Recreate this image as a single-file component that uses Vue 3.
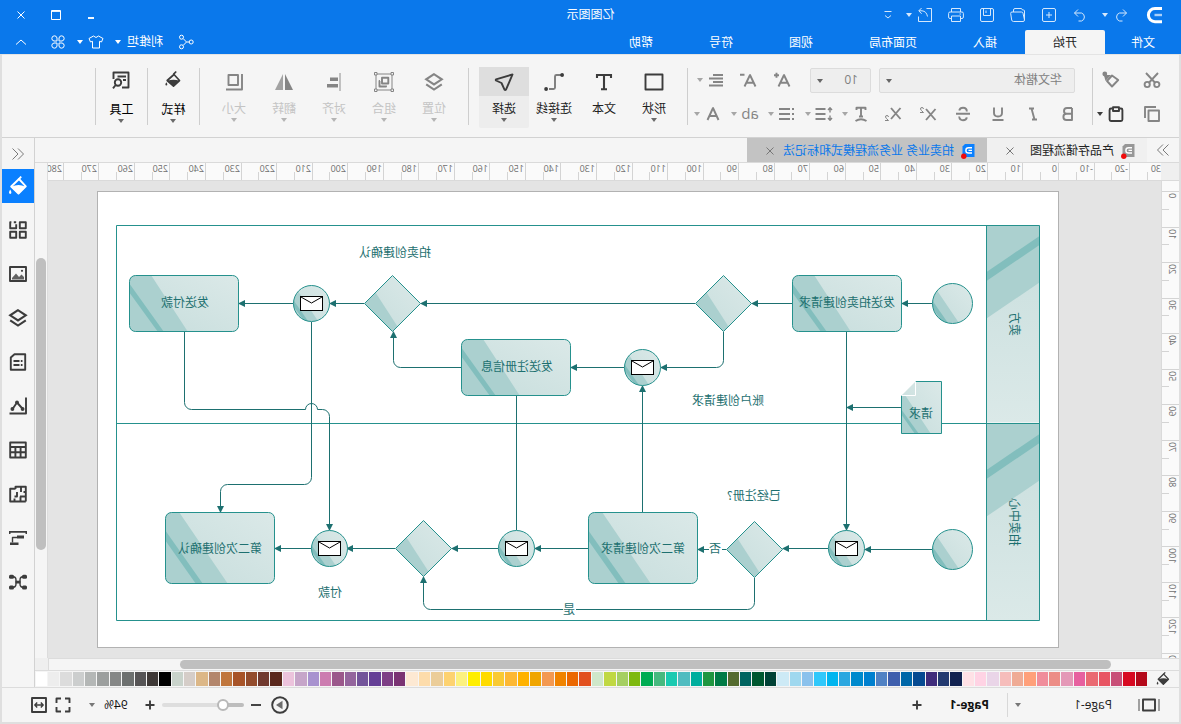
<script setup>
import { ref } from 'vue'

const menuTabs = ['文件', '开始', '插入', '页面布局', '视图', '符号', '帮助']
const activeMenu = ref('开始')

const fileActions = ['plus-box', 'folder', 'save', 'print']
const formatButtons = [
  { icon: 'bold', label: '加粗' },
  { icon: 'italic', label: '斜体' },
  { icon: 'underline', label: '下划线' },
  { icon: 'strike', label: '删除线' },
  { icon: 'sup', label: '上标' },
  { icon: 'sub', label: '下标' }
]
const formatMenus = [
  { icon: 'text-path', label: '文本方向' },
  { icon: 'line-height', label: '行距' },
  { icon: 'list', label: '项目符号' },
  { text: 'ab', label: '突出显示' },
  { icon: 'font-color', label: '字体颜色' }
]
const drawTools = [
  { icon: 'shape', label: '形状', menu: true },
  { icon: 'text', label: '文本', menu: false },
  { icon: 'connector', label: '连接线', menu: true },
  { icon: 'select', label: '选择', menu: true, active: true }
]
const arrangeTools = [
  { icon: 'layers', label: '位置' },
  { icon: 'group', label: '组合' },
  { icon: 'align', label: '对齐' },
  { icon: 'flip', label: '翻转' },
  { icon: 'size', label: '大小' }
]
const sideTools = ['bucket', 'grid', 'image', 'layers', 'note', 'chart', 'table', 'plan', 'gantt', 'mind']

const step = 35.54
const hMajor = Array.from({ length: 32 }, (_, i) => {
  const n = i - 3
  return { label: n * 10, at: Math.round(n * step) + 102, mid: Math.round((n + 0.5) * step) + 102 }
})
const vMajor = Array.from({ length: 14 }, (_, n) => ({
  label: n * 10,
  at: Math.round(n * step) + 10,
  mid: Math.round((n - 0.5) * step) + 10
}))

const palette = (
  'b4091a d70921 c84f77 e85563 ea6a72 e7609f e498b7 ec8d86 f08d9b ffa07a efab95 f6bdbb ead5e8 ffd3e4 ffe1e6 ' +
  '112250 233a70 3f2c7b 064a91 0067a8 3f5fad 5182c4 0080cf 008acd 2ba7e0 00b5ef 30c8fb 8ac1ec 9fd8ef cdeaf6 ' +
  '004236 005830 006460 556b2f 007b46 1f9640 00ae9d 50bcc0 1acab1 47b97f 00ac53 7eb90f a5cf62 c0d843 cfe7ca ' +
  'e2501f eb6700 f08300 f39951 f0a500 ffb200 fdb833 f9ca33 ffdb00 ffee00 fcf17f fdd270 ebcd99 fddcab fde9d3 ' +
  '7a3373 7e3f86 653f96 73549a 94659d 9b588b cc7cb0 a892cf c6a5c9 ecc3dc ' +
  '5a281c 713a2f 934c2c a85428 c0763d b3866c dcb787 d5cdc8 c9d3cb ' +
  '000000 3e3836 565455 6d706f 858786 9c9f9e b4b7b6 cccece dcdcdc ededed ffffff'
).split(' ')

const zoom = ref(21)

const links = [
  'M249 303.5H279', 'M389 303.5H429', 'M486 303.5H760', 'M817 303.5H851', 'M888 303.5H942',
  'M457.5 332V360.5A7 7 0 0 0 464.5 367.5H520', 'M557 367.5H610',
  'M719 367.5H780.5A7 7 0 0 0 787.5 360.5V332', 'M334.5 332V530', 'M280 407.5H334',
  'M249 549.5H316', 'M353 548.5H398', 'M455 549.5H483', 'M593 548.5H646', 'M683 548.5H729',
  'M786 548.5H834', 'M870 548.5H906', 'M538.5 512V386',
  'M426.5 578V602.5A7 7 0 0 0 433.5 609.5H750.5A7 7 0 0 0 757.5 602.5V577',
  'M996.5 332V402.5A7 7 0 0 1 989.5 409.5H875.5A6 6 0 0 0 863.5 409.5H858.5A7 7 0 0 0 851.5 416.5V530',
  'M869.5 322V477.5A7 7 0 0 0 876.5 484.5H953.5A7 7 0 0 1 960.5 491.5V512'
]
const nodes = [
  { kind: 'start', x: 228, y: 303 }, { kind: 'start', x: 228, y: 549 },
  { kind: 'task', x: 279, y: 275 }, { kind: 'task', x: 610, y: 339 }, { kind: 'task', x: 942, y: 275 },
  { kind: 'task-tall', x: 483, y: 512 }, { kind: 'task-tall', x: 906, y: 512 },
  { kind: 'gate', x: 457, y: 303 }, { kind: 'gate', x: 788, y: 303 },
  { kind: 'gate', x: 426, y: 549 }, { kind: 'gate', x: 757, y: 548 },
  { kind: 'mail', x: 869, y: 303 }, { kind: 'mail', x: 538, y: 367 }, { kind: 'mail', x: 334, y: 548 },
  { kind: 'mail', x: 664, y: 548 }, { kind: 'mail', x: 851, y: 548 }
]
const captions = [
  { t: '发送拍卖创建请求', x: 334, y: 307 }, { t: '发送付款', x: 996, y: 307 },
  { t: '发送注册信息', x: 664, y: 371 }, { t: '第二次创建请求', x: 538, y: 553 },
  { t: '第二次创建确认', x: 961, y: 553 }, { t: '拍卖创建确认', x: 786, y: 257 },
  { t: '账户创建请求', x: 453, y: 405 }, { t: '已经注册?', x: 427, y: 500 },
  { t: '付款', x: 851, y: 597 }, { t: '请求', x: 260, y: 418 },
  { t: '否', x: 466, y: 553, bg: true }, { t: '是', x: 612, y: 614, bg: true }
]
</script>

<template>
  <div class="app">
    <svg class="sprite" aria-hidden="true">
      <symbol id="caret" viewBox="0 0 8 4"><path d="M1 0H7L4 4Z" fill="currentColor" /></symbol>
      <symbol id="logo" viewBox="0 0 24 24">
        <path d="M5 5.5H12A6.6 6.6 0 0 1 12 18.7H5" fill="none" stroke="#fff" stroke-width="3" />
        <path d="M5 12H12.5" stroke="#a9cff8" stroke-width="2.4" />
      </symbol>
      <symbol id="undo" viewBox="0 0 16 16"><path d="M6 2.5L2.5 6L6 9.5M2.5 6H9.5A4.2 4.2 0 0 1 9.5 14H6.5" class="s1" /></symbol>
      <symbol id="redo" viewBox="0 0 16 16"><path d="M10 2.5L13.5 6L10 9.5M13.5 6H6.5A4.2 4.2 0 0 0 6.5 14H9.5" class="s1" /></symbol>
      <symbol id="plus-box" viewBox="0 0 16 16"><path d="M1.5 3Q1.5 1.5 3 1.5H13Q14.5 1.5 14.5 3V13Q14.5 14.5 13 14.5H3Q1.5 14.5 1.5 13ZM8 5V11M5 8H11" class="s1" /></symbol>
      <symbol id="folder" viewBox="0 0 16 16"><path d="M1.5 13V4Q1.5 3 2.5 3H3.5L4.5 1.5H11Q12.5 1.5 12.5 3V5M1.5 13Q1.5 14.5 3 14.5H12.5Q14 14.5 14.3 13L15.3 6.5Q15.5 5 14 5H4.5Q3.3 5 3 6.2L1.5 13" class="s1" /></symbol>
      <symbol id="save" viewBox="0 0 16 16"><path d="M1.5 3Q1.5 1.5 3 1.5H13Q14.5 1.5 14.5 3V13Q14.5 14.5 13 14.5H3Q1.5 14.5 1.5 13ZM4.5 1.5V8.5H11.5V1.5M9 3.5V6" class="s1" /></symbol>
      <symbol id="print" viewBox="0 0 16 16"><path d="M3.5 5V1.5H12.5V5M3.5 11.5H2Q.6 11.5 .6 10V6.5Q.6 5 2 5H14Q15.4 5 15.4 6.5V10Q15.4 11.5 14 11.5H12.5M3.5 9H12.5V14.5H3.5ZM3 7H4.5" class="s1" /></symbol>
      <symbol id="export" viewBox="0 0 16 16"><path d="M6.5 1.5H1.5V14.5H14.5V9.5M14 3.8H11Q6.5 4.2 5.5 9.5M14.2 3.8L11.4 1M14.2 3.8L11.4 6.8" class="s1" /></symbol>
      <symbol id="more" viewBox="0 0 12 12"><path d="M2.5 2.5H9.5M3 6.5L6 9L9 6.5" class="s1" /></symbol>
      <symbol id="minimize" viewBox="0 0 12 12"><path d="M3 9H9" class="s2" /></symbol>
      <symbol id="maximize" viewBox="0 0 12 12"><path d="M1.5 1.5H10.5V10.5H1.5ZM1.5 2.4H10.5" class="s1" /></symbol>
      <symbol id="close" viewBox="0 0 12 12"><path d="M2.5 2.5L9.5 9.5M9.5 2.5L2.5 9.5" class="s1" /></symbol>
      <symbol id="share" viewBox="0 0 16 16"><path d="M5.2 7.6L10.6 4.2M5.2 8.4L10.6 11.8" class="s1" transform="translate(16 0) scale(-1 1)" /><circle cx="3.3" cy="3.4" r="2" class="s1" /><circle cx="3.3" cy="12.6" r="2" class="s1" /><circle cx="12.8" cy="8" r="2" class="s1" /></symbol>
      <symbol id="share-out" viewBox="0 0 16 16"><path d="M4.8 8H7.5L10.8 4.6M7.5 8L10.8 11.4" class="s1" /><circle cx="2.8" cy="8" r="2" class="s1" /><circle cx="12.5" cy="3.2" r="2" class="s1" /><circle cx="12.5" cy="12.8" r="2" class="s1" /></symbol>
      <symbol id="shirt" viewBox="0 0 16 16"><path d="M5.5 2L1 4.5L2.5 8L4.5 7.3V14H11.5V7.3L13.5 8L15 4.5L10.5 2Q8 5 5.5 2Z" class="s1" /></symbol>
      <symbol id="clover" viewBox="0 0 16 16"><path d="M7 7H4A2.6 2.6 0 1 1 7 4ZM9 7V4A2.6 2.6 0 1 1 12 7ZM7 9V12A2.6 2.6 0 1 1 4 9ZM9 9H12A2.6 2.6 0 1 1 9 12Z" class="s1" /></symbol>
      <symbol id="up" viewBox="0 0 14 14"><path d="M2 9.5L7 5L12 9.5" class="s1" /></symbol>
      <symbol id="cut" viewBox="0 0 18 18"><path d="M3 2L12.3 12M15 2L5.7 12" class="s2" /><circle cx="4.2" cy="13.5" r="2.6" class="s2" /><circle cx="13.8" cy="13.5" r="2.6" class="s2" /></symbol>
      <symbol id="copy" viewBox="0 0 18 18"><path d="M5.5 5.5H16V16H5.5ZM2 13V2H13" class="s2" transform="translate(18 0) scale(-1 1)" /></symbol>
      <symbol id="copy-left" viewBox="0 0 18 18"><path d="M2 5.5H12.5V16H2ZM5 2H16V13" class="s2" /></symbol>
      <symbol id="brush" viewBox="0 0 18 18"><path d="M1.8 9L8 4.5L13 10L8 15.5Z" class="s2" /><path d="M9 4L14.5 10L16 4.5L13 4Z" fill="currentColor" /><circle cx="15.2" cy="3" r="2.4" fill="currentColor" /></symbol>
      <symbol id="paste" viewBox="0 0 18 18"><path d="M5 3.5H4Q2.6 3.5 2.6 5V14.5Q2.6 16 4 16H14Q15.4 16 15.4 14.5V5Q15.4 3.5 14 3.5H13M6 2.2H12V6H6Z" class="s2" /></symbol>
      <symbol id="bold" viewBox="0 0 18 18"><path d="M5 3H10Q13 3 13 6Q13 8.8 10 8.8H5M5 8.8H10.5Q13.6 8.8 13.6 12Q13.6 15 10.5 15H5V3" class="s2" /></symbol>
      <symbol id="italic" viewBox="0 0 18 18"><path d="M8 3.5H13M10.5 3.5L7.5 14.5M5 14.5H10" class="s2" /></symbol>
      <symbol id="underline" viewBox="0 0 18 18"><path d="M5 2.5V8Q5 11.5 9 11.5Q13 11.5 13 8V2.5M3.5 15H14.5" class="s2" /></symbol>
      <symbol id="strike" viewBox="0 0 18 18"><path d="M12.8 5.5Q12 2.8 9 2.8Q5.2 2.8 5.2 6.5M12.8 11.5Q12.5 15.2 9 15.2Q5.6 15.2 5.2 12.3M2 8.8H16" class="s2" /></symbol>
      <symbol id="sup" viewBox="0 0 18 18"><path d="M1.5 4L11 15M11 4L1.5 15" class="s2" /><path d="M13.5 4Q13.6 2.5 15 2.5Q16.6 2.5 16.5 4Q16.4 5 13.5 7.5H17" class="s1" /></symbol>
      <symbol id="sub" viewBox="0 0 18 18"><path d="M1.5 3L11 14M11 3L1.5 14" class="s2" /><path d="M13.5 12Q13.6 10.5 15 10.5Q16.6 10.5 16.5 12Q16.4 13 13.5 15.5H17" class="s1" /></symbol>
      <symbol id="text-path" viewBox="0 0 18 18"><path d="M4.5 5V2.8H13.5V5M9 2.8V11.5M7 11.5H11M3.5 16Q9 12.5 14.5 16" class="s2" /></symbol>
      <symbol id="line-height" viewBox="0 0 18 18"><path d="M7.5 4H17.5M7.5 9H17.5M7.5 14H17.5" class="s2" /><path d="M3 3V7.5M3 10.5V15M1 5L3 2.8L5 5M1 13L3 15.2L5 13" class="s15" /></symbol>
      <symbol id="list" viewBox="0 0 18 18"><path d="M6 4H17M6 9H17M6 14H17M2 4H4M2 9H4M2 14H4" class="s2" /></symbol>
      <symbol id="font-color" viewBox="0 0 18 18"><path d="M3.5 15L9 3L14.5 15M5.3 11H12.7" class="s2" /></symbol>
      <symbol id="grow" viewBox="0 0 20 18"><path d="M3.5 15.5L9 4L14.5 15.5M5.3 11.8H12.7M14 4.2H19M16.5 1.7V6.7" class="s2" /></symbol>
      <symbol id="shrink" viewBox="0 0 20 18"><path d="M3.5 15.5L9 4L14.5 15.5M5.3 11.8H12.7M14.5 3.8H19" class="s2" /></symbol>
      <symbol id="para" viewBox="0 0 18 18"><path d="M2 4H12M2 7.5H16M2 11H12M2 14.5H16" class="s2" /></symbol>

      <symbol id="shape" viewBox="0 0 20 20"><path d="M1.5 2.5H18.5V17.5H1.5Z" class="s2" /></symbol>
      <symbol id="text" viewBox="0 0 20 20"><path d="M3 6V3H17V6M10 3V17M7 17.2H13" class="s2b" /></symbol>
      <symbol id="connector" viewBox="0 0 20 20"><path d="M3 3H7.5Q9 3 9 4.5V15.5Q9 17 10.5 17H15" class="s2 soft" /><circle cx="1.9" cy="3" r="1.9" fill="currentColor" /><circle cx="17.9" cy="17" r="1.9" fill="currentColor" /></symbol>
      <symbol id="select" viewBox="0 0 20 20"><path d="M1.5 2.5L18 7.3Q18.5 8 18 8.5L12.5 11L9.5 17.7Q8.8 18.5 8 17.7Z" class="s2" /></symbol>
      <symbol id="layers" viewBox="0 0 20 20"><path d="M10 2.2L17.8 7.3L10 12.4L2.2 7.3ZM2.2 12.3L10 17.5L17.8 12.3" class="s2b" /></symbol>
      <symbol id="group" viewBox="0 0 20 20"><path d="M2 2H18V18H2Z" class="s1" /><path d="M5.7 5.7H12V11.5H5.7ZM14 9H14.5V14.5H8V13.5" class="s2" /><path d="M.5 .5H3V3H.5ZM17 .5H19.5V3H17ZM.5 17H3V19.5H.5ZM17 17H19.5V19.5H17Z" class="s1 hollow" /></symbol>
      <symbol id="align" viewBox="0 0 20 20"><path d="M4 1V19" class="s15 soft" /><path d="M6 5.5H14V9H6ZM6 12H17V15.5H6Z" fill="currentColor" /></symbol>
      <symbol id="flip" viewBox="0 0 20 20"><path d="M9 2V18H1Z" fill="currentColor" /><path d="M11 2V18H19Z" fill="currentColor" opacity=".75" /></symbol>
      <symbol id="size" viewBox="0 0 20 20"><path d="M6 3H15.5V13H6ZM2 2V17.5H18" class="s2" /></symbol>
      <symbol id="style" viewBox="0 0 20 20"><path d="M9 4.5L15.8 10.5L9.5 16L3.5 10.5Z" class="s15b" /><path d="M3.5 10.8Q9.5 8.5 15.8 10.8L9.5 16.5Z" fill="currentColor" /><path d="M6.8 1.5L9.6 4.3" class="s15b" /><path d="M16.6 12.2Q18.6 15.2 16.6 15.4Q14.8 15.2 16.6 12.2Z" fill="currentColor" /></symbol>
      <symbol id="tools" viewBox="0 0 20 20"><path d="M9 17.5H2.5V2.5H17.5V9M5 6.5H13.5M5 10H8" class="s2" /><circle cx="13" cy="12.5" r="3.2" class="s2" /><path d="M15.3 15L18 18.3" class="s2" /></symbol>
      <symbol id="bucket" viewBox="0 0 20 20"><path d="M9 3L16.8 10.5L9.5 17.5L2.2 10.3Z" class="s2" /><path d="M2.5 10.7Q9.5 7.5 16.6 10.7L9.5 18.2Z" fill="currentColor" /><path d="M6.8 .6L9.8 3.8" class="s2" /><path d="M17.8 13.6Q20.2 17.6 17.8 18Q15.4 17.6 17.8 13.6Z" fill="currentColor" /></symbol>
      <symbol id="grid" viewBox="0 0 20 20"><path d="M2.2 2.2H8.2V8.2H2.2ZM2.2 11.8H8.2V17.8H2.2ZM11.8 11.8H17.8V17.8H11.8ZM11.8 2.2H14.2M16.6 2.2H17.8V8.2H11.8V4.2" class="s2" /></symbol>
      <symbol id="image" viewBox="0 0 20 20"><path d="M2 3H18V17H2Z" class="s2" /><path d="M4 15.5V13L6.5 10.5L9 13L12 9.5L16 14V15.5Z" fill="currentColor" opacity=".8" /><circle cx="6" cy="6.8" r="1.1" fill="currentColor" /></symbol>
      <symbol id="note" viewBox="0 0 20 20"><path d="M2.8 2.2H13.5L17.2 5.5V17.8H2.8Z" class="s2" /><path d="M5.5 9H7.2M8.5 9H14.5M5.5 13H7.2M8.5 13H14.5" class="s2" /></symbol>
      <symbol id="chart" viewBox="0 0 20 20"><path d="M2 1.5V17.5H18.5M5.2 13L11 6.5L15.5 13" class="s2" /><circle cx="5.4" cy="13" r="1.9" fill="currentColor" /><circle cx="11" cy="6.3" r="1.9" fill="currentColor" /><circle cx="15.6" cy="13" r="1.9" fill="currentColor" /></symbol>
      <symbol id="table" viewBox="0 0 20 20"><path d="M2.2 2.5H17.8V17.5H2.2ZM2.2 7H17.8M2.2 12.3H17.8M7.4 7V17.5M12.6 7V17.5" class="s2" /></symbol>
      <symbol id="plan" viewBox="0 0 20 20"><path d="M2.2 17.5V2.8H12.5V5M12.5 4.8H17.8V17.5H2.2M7 2.8V8M2.2 8H4.5M2.2 12.5H8M7.5 12.5V17.5M11 8V12.5H13.5M13.5 14.5V17.5" class="s2" /></symbol>
      <symbol id="gantt" viewBox="0 0 20 20"><path d="M1 3.5H19M1.8 3V5.5M18.2 3V5.5" class="s2b" /><path d="M8.5 8.5H17M3.5 0" class="s2b" /><path d="M14.5 10V15M10 17H18M5 0M16 10" class="s15" /></symbol>
      <symbol id="gantt-steps" viewBox="0 0 20 20"><path d="M1 3H19V6H17.5V4.8H2.5V6H1Z" fill="currentColor" /><path d="M4 7.5H11V10.5H4ZM9.5 14.5H18V17H9.5Z" fill="currentColor" /><path d="M11 9.5H15.5V14.5" class="s15" /></symbol>
      <symbol id="mind" viewBox="0 0 20 20"><path d="M4 4.5Q8 4.5 8 8V12Q8 15.5 4 15.5M16 4.5Q12 4.5 12 8V12Q12 15.5 16 15.5M8 10H12" class="s15" /><rect x="1" y="2.8" width="5" height="4" rx="1.5" fill="currentColor" /><rect x="14" y="2.8" width="5" height="4" rx="1.5" fill="currentColor" /><rect x="1" y="13.5" width="5" height="4" rx="1.5" fill="currentColor" /><rect x="14" y="13.5" width="5" height="4" rx="1.5" fill="currentColor" /><rect x="7.5" y="8.7" width="5" height="2.8" fill="currentColor" /></symbol>
      <symbol id="dbl" viewBox="0 0 16 14"><path d="M2.5 1.5L8 7L2.5 12.5M8 1.5L13.5 7L8 12.5" class="s1" /></symbol>
      <symbol id="doc" viewBox="0 0 14 16"><path d="M.5 1H10L12.5 3.5V14H.5Z" fill="currentColor" /><path d="M3 4.8H6.5A2.6 2.6 0 0 1 6.5 10H3M3 7.4H6.5" fill="none" stroke="#fff" stroke-width="1.4" /><circle cx="11.2" cy="13.2" r="2.7" fill="#f00a0a" /></symbol>
      <symbol id="pages" viewBox="0 0 22 14"><path d="M5 1.5H17V12.5H5Z" class="s2" /><path d="M1 1V13M21 1V13" class="s15 soft" /></symbol>
      <symbol id="plus" viewBox="0 0 12 12"><path d="M6 1.5V10.5M1.5 6H10.5" class="s2" /></symbol>
      <symbol id="minus" viewBox="0 0 12 12"><path d="M1 6H11" class="s2" /></symbol>
      <symbol id="play" viewBox="0 0 18 18"><circle cx="9" cy="9" r="7.8" class="s2" /><path d="M6.5 4.8L13 9L6.5 13.2Z" fill="#6c6c6c" /></symbol>
      <symbol id="full" viewBox="0 0 16 16"><path d="M1.5 6V1.5H6M10 1.5H14.5V6M14.5 10V14.5H10M6 14.5H1.5V10" class="s2" /></symbol>
      <symbol id="fit" viewBox="0 0 16 16"><path d="M1 1H15V15H1Z" class="s2" /><path d="M4 8H12M6.2 5.5L3.8 8L6.2 10.5M9.8 5.5L12.2 8L9.8 10.5" class="s15" /></symbol>
    </svg>

    <header class="top">
      <div class="title-row">
        <div class="quick">
          <svg class="logo"><use href="#logo" /></svg>
          <span class="pair">
            <button class="q" aria-label="撤销"><svg class="i16"><use href="#undo" /></svg></button>
            <button class="q-caret" aria-label="撤销列表"><svg class="caret"><use href="#caret" /></svg></button>
          </span>
          <button class="q" aria-label="重做"><svg class="i16"><use href="#redo" /></svg></button>
          <button v-for="a in fileActions" :key="a" class="q" :aria-label="a"><svg class="i16"><use :href="'#' + a" /></svg></button>
          <span class="pair">
            <button class="q" aria-label="导出"><svg class="i16"><use href="#export" /></svg></button>
            <button class="q-caret" aria-label="导出列表"><svg class="caret"><use href="#caret" /></svg></button>
          </span>
          <button class="q-more" aria-label="更多"><svg class="i12"><use href="#more" /></svg></button>
        </div>
        <div class="app-title">亿图图示</div>
        <div class="window-controls">
          <button v-for="w in ['minimize', 'maximize', 'close']" :key="w" :aria-label="w"><svg class="i12"><use :href="'#' + w" /></svg></button>
        </div>
      </div>
      <div class="menu-row">
        <nav class="menu">
          <button v-for="t in menuTabs" :key="t" class="menu-tab" :class="{ active: t === activeMenu }" @click="activeMenu = t">{{ t }}</button>
        </nav>
        <div class="account">
          <button class="share" aria-label="分享"><svg class="i16"><use href="#share-out" /></svg></button>
          <button class="user">利维坦<svg class="caret"><use href="#caret" /></svg></button>
          <button class="theme" aria-label="主题"><svg class="i16"><use href="#shirt" /></svg><svg class="caret"><use href="#caret" /></svg></button>
          <button class="apps" aria-label="应用"><svg class="i16"><use href="#clover" /></svg></button>
          <button aria-label="收起"><svg class="i14"><use href="#up" /></svg></button>
        </div>
      </div>
    </header>

    <div class="frame">
      <section class="ribbon">
        <div class="clipboard">
          <div class="r-row wide">
            <button class="rb" aria-label="剪切"><svg class="i18"><use href="#cut" /></svg></button>
            <button class="rb" aria-label="格式刷"><svg class="i18"><use href="#brush" /></svg></button>
          </div>
          <div class="r-row">
            <button class="rb" aria-label="复制"><svg class="i18"><use href="#copy-left" /></svg></button>
            <button class="rb dark split-paste" aria-label="粘贴"><svg class="i18"><use href="#paste" /></svg><svg class="caret"><use href="#caret" /></svg></button>
          </div>
        </div>
        <i class="sep"></i>
        <div class="font-group">
          <div class="r-row first">
            <label class="combo family"><select aria-label="字体"><option>华文楷体</option></select><svg class="caret"><use href="#caret" /></svg></label>
            <label class="combo pt"><select aria-label="字号"><option>10</option></select><svg class="caret"><use href="#caret" /></svg></label>
            <button class="rb grow" aria-label="增大字号"><svg class="i20w"><use href="#grow" /></svg></button>
            <button class="rb" aria-label="减小字号"><svg class="i20w"><use href="#shrink" /></svg></button>
            <button class="rs para" aria-label="对齐"><svg class="i18"><use href="#para" /></svg><svg class="caret"><use href="#caret" /></svg></button>
          </div>
          <div class="r-row second">
            <button v-for="b in formatButtons" :key="b.icon" class="rb" :aria-label="b.label"><svg class="i18"><use :href="'#' + b.icon" /></svg></button>
            <div class="splits">
              <button v-for="b in formatMenus" :key="b.label" class="rs" :aria-label="b.label">
                <svg v-if="b.icon" class="i18"><use :href="'#' + b.icon" /></svg>
                <span v-else class="letters">{{ b.text }}</span>
                <svg class="caret"><use href="#caret" /></svg>
              </button>
            </div>
          </div>
        </div>
        <i class="sep"></i>
        <div class="tools draw">
          <button v-for="t in drawTools" :key="t.label" class="tool" :class="{ active: t.active }">
            <span class="tool-icon"><svg class="i20"><use :href="'#' + t.icon" /></svg></span>
            <span class="tool-label">{{ t.label }}</span>
            <svg v-if="t.menu" class="caret"><use href="#caret" /></svg>
          </button>
        </div>
        <i class="sep"></i>
        <div class="tools arrange">
          <button v-for="t in arrangeTools" :key="t.label" class="tool" disabled>
            <span class="tool-icon"><svg class="i20"><use :href="'#' + t.icon" /></svg></span>
            <span class="tool-label">{{ t.label }}</span>
            <svg class="caret"><use href="#caret" /></svg>
          </button>
        </div>
        <i class="sep"></i>
        <button class="tool strong">
          <span class="tool-icon"><svg class="i20"><use href="#style" /></svg></span>
          <span class="tool-label">样式</span>
          <svg class="caret"><use href="#caret" /></svg>
        </button>
        <i class="sep"></i>
        <button class="tool strong">
          <span class="tool-icon"><svg class="i20"><use href="#tools" /></svg></span>
          <span class="tool-label">工具</span>
          <svg class="caret"><use href="#caret" /></svg>
        </button>
        <i class="sep"></i>
      </section>

      <main class="workspace">
        <div class="editor">
          <div class="doc-tabs">
            <button class="expand" aria-label="展开"><svg class="dbl"><use href="#dbl" /></svg></button>
            <div class="doc-tab gray">
              <svg class="doc-icon"><use href="#doc" /></svg>
              <span>产品存储流程图</span>
              <button aria-label="关闭"><svg class="i12"><use href="#close" /></svg></button>
            </div>
            <div class="doc-tab current">
              <svg class="doc-icon"><use href="#doc" /></svg>
              <span>拍卖业务 业务流程模式和标记法</span>
              <button aria-label="关闭"><svg class="i12"><use href="#close" /></svg></button>
            </div>
          </div>

          <div class="board">
            <div class="corner"></div>
            <svg class="ruler-h">
              <g v-for="m in hMajor" :key="m.label">
                <rect :x="m.at" y="0" width="1" height="17" />
                <rect :x="m.mid" y="9" width="1" height="8" />
                <text :x="m.at + 2" y="9">{{ m.label }}</text>
              </g>
            </svg>
            <svg class="ruler-v">
              <g v-for="m in vMajor" :key="m.label">
                <rect x="0" :y="m.at" width="17" height="1" />
                <rect x="10" :y="m.mid" width="7" height="1" />
                <text :transform="'translate(10 ' + (m.at + 2) + ') rotate(-90)'" text-anchor="end">{{ m.label }}</text>
              </g>
            </svg>

            <div class="canvas">
              <svg class="page" viewBox="122 191 962 457" width="962" height="457">
                <defs>
                  <marker id="tip" markerUnits="userSpaceOnUse" markerWidth="8" markerHeight="8" refX="6" refY="4" orient="auto">
                    <path d="M0 .5L7 4L0 7.5Z" class="tip" />
                  </marker>
                  <linearGradient id="pale" x1="0" y1="0" x2="1" y2="1"><stop offset="0" stop-color="#dbe9e8" /><stop offset="1" stop-color="#c6dddc" /></linearGradient>
                  <linearGradient id="lane" x1="0" y1="1" x2="0" y2="0"><stop offset="0" stop-color="#dbe9e8" /><stop offset="1" stop-color="#c8dedd" /></linearGradient>
                  <clipPath id="c-task"><rect x=".5" y=".5" width="109" height="56" rx="6" /></clipPath>
                  <clipPath id="c-tall"><rect x=".5" y=".5" width="109" height="71" rx="6" /></clipPath>
                  <clipPath id="c-start"><circle cx=".5" cy=".5" r="20" /></clipPath>
                  <clipPath id="c-mail"><circle cx=".5" cy=".5" r="18" /></clipPath>
                  <clipPath id="c-doc"><path d="M239.5 381.5H265.5V395.5H279.5V433.5H239.5Z" /></clipPath>

                  <g id="task">
                    <rect x=".5" y=".5" width="109" height="56" rx="6" class="pale" />
                    <g clip-path="url(#c-task)"><path d="M88 0L51 57H110V0Z" class="band" /><path d="M110 8L75 57H81L110 17Z" class="stripe" /></g>
                    <rect x=".5" y=".5" width="109" height="56" rx="6" class="edge" />
                  </g>
                  <g id="task-tall">
                    <rect x=".5" y=".5" width="109" height="71" rx="6" class="pale" />
                    <g clip-path="url(#c-tall)"><path d="M96 0L47 72H110V0Z" class="band" /><path d="M110 18L72 72H79L110 28Z" class="stripe" /></g>
                    <rect x=".5" y=".5" width="109" height="71" rx="6" class="edge" />
                  </g>
                  <g id="gate">
                    <path d="M.5 -27.5L28.5 .5L.5 28.5L-27.5 .5Z" class="pale" />
                    <path d="M17.5 -10.5L-4.5 23.5L.5 28.5L28.5 .5Z" class="band" />
                    <path d="M.5 -27.5L28.5 .5L.5 28.5L-27.5 .5Z" class="edge" />
                  </g>
                  <g id="start">
                    <circle cx=".5" cy=".5" r="20" class="pale" />
                    <g clip-path="url(#c-start)"><path d="M19 -17L-6 20H22V-17Z" class="band" /><path d="M21 -3L5 20H10L21 4Z" class="stripe" /></g>
                    <circle cx=".5" cy=".5" r="20" class="edge" />
                  </g>
                  <g id="mail">
                    <circle cx=".5" cy=".5" r="18" class="pale" />
                    <g clip-path="url(#c-mail)"><path d="M16 -15L-6 18H20V-15Z" class="band" /><path d="M20 -5L4 18H8L20 1Z" class="stripe" /></g>
                    <circle cx=".5" cy=".5" r="18" class="edge" />
                    <rect x="-10.5" y="-6.5" width="22" height="14" class="envelope" />
                    <path d="M-10 -6L.5 0L11 -6" class="envelope" />
                  </g>
                  <g id="lane-head">
                    <rect x="141.5" y="225.5" width="53" height="197" fill="url(#lane)" />
                    <path d="M141.5 225.5H194.5V318.5L141.5 282.5Z" class="band" />
                    <path d="M141.5 236L194.5 272V281L141.5 245Z" class="stripe" />
                  </g>
                </defs>

                <use href="#lane-head" />
                <use href="#lane-head" y="198" />
                <path d="M141.5 225.5H1064.5V620.5H141.5ZM194.5 225.5V620.5M141.5 423.5H1064.5" class="edge" />

                <path d="M239.5 381.5H265.5L279.5 395.5V433.5H239.5Z" class="pale" />
                <g clip-path="url(#c-doc)"><path d="M276 395L250 434H280V395Z" class="band" /><path d="M280 409L262 434H266L280 414Z" class="stripe" /></g>
                <path d="M265.5 381.5H239.5V433.5H279.5V395.5" class="edge" />
                <path d="M265.5 381.5V395.5H279.5" class="fold" />

                <path v-for="d in links" :key="d" :d="d" class="link" marker-end="url(#tip)" />
                <path d="M664.5 396V530" class="link" />
                <use v-for="(n, i) in nodes" :key="i" :href="'#' + n.kind" :x="n.x" :y="n.y" />
                <template v-for="c in captions" :key="c.t + c.x">
                  <rect v-if="c.bg" :x="c.x - 7" :y="c.y - 10" width="13" height="12" fill="#fff" />
                  <text :x="c.x" :y="c.y" class="caption">{{ c.t }}</text>
                </template>
                <text transform="translate(171 324) rotate(-90)" class="caption">卖方</text>
                <text transform="translate(171 522) rotate(-90)" class="caption">拍卖中心</text>
              </svg>
            </div>

            <div class="scroll-v"><i class="v-before"></i><i class="thumb v-thumb"></i><i class="v-after"></i></div>
            <div class="scroll-h"><i class="h-before"></i><i class="thumb h-thumb"></i><i class="h-after"></i></div>
            <div class="scroll-corner"></div>
          </div>

          <div class="palette">
            <button class="fill-button" aria-label="填充"><svg class="i14"><use href="#bucket" /></svg></button>
            <div class="swatches"><button v-for="c in palette" :key="c" class="swatch" :style="{ background: '#' + c }" :aria-label="c"></button></div>
          </div>
        </div>

        <aside class="side">
          <button class="side-toggle" aria-label="收起面板"><svg class="dbl back"><use href="#dbl" /></svg></button>
          <button v-for="(s, i) in sideTools" :key="s" class="side-tool" :class="{ active: i === 0 }" :aria-label="s"><svg class="i20"><use :href="s === 'gantt' ? '#gantt-steps' : '#' + s" /></svg></button>
        </aside>
      </main>

      <footer class="status">
        <button class="pages-button" aria-label="页面列表"><svg class="pages"><use href="#pages" /></svg></button>
        <label class="page-pick"><select aria-label="页面"><option>Page-1</option></select><svg class="caret"><use href="#caret" /></svg></label>
        <i class="status-sep"></i>
        <button class="page-tab">Page-1</button>
        <button class="sb" aria-label="新建页面"><svg class="i12"><use href="#plus" /></svg></button>
        <div class="zoom-area">
          <button class="sb play" aria-label="播放"><svg class="i18"><use href="#play" /></svg></button>
          <button class="sb" aria-label="缩小"><svg class="i12"><use href="#minus" /></svg></button>
          <input v-model="zoom" type="range" min="0" max="100" aria-label="缩放" />
          <button class="sb" aria-label="放大"><svg class="i12"><use href="#plus" /></svg></button>
          <button class="zoom-value">94%<svg class="caret"><use href="#caret" /></svg></button>
          <button class="sb full" aria-label="全屏"><svg class="i16"><use href="#full" /></svg></button>
          <button class="sb" aria-label="适应宽度"><svg class="i16"><use href="#fit" /></svg></button>
        </div>
      </footer>
    </div>
  </div>
</template>

<style>
body {
  margin: 0;
  background: #f5f5f5;
}
</style>

<style scoped>
.app {
  display: flex;
  flex-direction: column;
  height: 100vh;
  overflow: hidden;
  box-sizing: border-box;
  transform: scaleX(-1);
  font-family: "Open Sans", "Noto Sans CJK SC", sans-serif;
  font-size: 12px;
  line-height: 16px;
  color: #222;
  background: #f5f5f5;
}
.app *,
.app *::before {
  box-sizing: border-box;
}
.sprite {
  position: absolute;
  width: 0;
  height: 0;
}
button {
  display: flex;
  align-items: center;
  justify-content: center;
  padding: 0;
  border: 0;
  background: none;
  color: inherit;
  font: inherit;
  white-space: nowrap;
  flex: none;
}
svg {
  flex: none;
  display: block;
}
.s1, .s15, .s15b, .s2, .s2b {
  fill: none;
  stroke: currentColor;
  stroke-width: 1;
  stroke-linejoin: round;
}
.s15 { stroke-width: 1.4; }
.s15b { stroke-width: 1.7; }
.s2 { stroke-width: 1.9; }
.s2b { stroke-width: 2.1; stroke-linejoin: miter; }
.soft { opacity: .65; }
.hollow { fill: #f5f5f5; }
.i12 { width: 12px; height: 12px; }
.i14 { width: 14px; height: 14px; }
.i16 { width: 16px; height: 16px; }
.i18 { width: 18px; height: 18px; }
.i20 { width: 20px; height: 20px; }
.i20w { width: 20px; height: 18px; }
.caret { width: 8px; height: 4px; }

.top {
  flex: none;
  background: #0a78eb;
  color: #fff;
}
.title-row {
  display: grid;
  grid-template-columns: 1fr auto 1fr;
  align-items: center;
  height: 30px;
}
.quick {
  display: flex;
  align-items: center;
  gap: 9px;
  padding-left: 14px;
  color: #d5e8fc;
}
.logo { width: 24px; height: 24px; margin-right: 2px; }
.pair { display: flex; }
.q { width: 22px; height: 22px; }
.q-caret { width: 10px; height: 22px; }
.q-more { width: 14px; height: 22px; }
.window-controls {
  display: flex;
  justify-content: flex-end;
  padding-right: 4px;
}
.window-controls button { width: 35px; height: 28px; }
.menu-row {
  display: flex;
  justify-content: space-between;
  height: 24px;
}
.menu { display: flex; }
.menu-tab { padding: 2px 28px 0; height: 24px; }
.menu-tab:first-child { padding: 2px 26px 0; }
.menu-tab.active {
  background: #f5f5f5;
  color: #222;
  border-radius: 2px 2px 0 0;
}
.account {
  display: flex;
  align-items: center;
  gap: 10px;
  padding-right: 14px;
}
.share { margin-right: 5px; }
.user { gap: 5px; }
.theme { gap: 4px; }
.apps { margin-right: 12px; }

.frame {
  display: flex;
  flex-direction: column;
  flex: 1;
  min-height: 0;
  border: 2px solid #dfdfdf;
  border-top: 0;
}
.ribbon {
  display: flex;
  align-items: flex-start;
  height: 84px;
  flex: none;
  border-top: 1px solid #e4e4e4;
  border-bottom: 1px solid #d2d2d2;
  color: #858585;
}
.sep {
  flex: none;
  width: 1px;
  height: 57px;
  margin-top: 13px;
  background: #cecece;
}
.clipboard { width: 86px; padding: 8px 0 0 14px; }
.r-row { display: flex; align-items: center; height: 34px; gap: 11px; }
.r-row.wide { gap: 15px; }
.rb { width: 26px; height: 26px; }
.rs .caret { opacity: .7; }
.dark { color: #3c3c3c; }
.split-paste { width: 34px; gap: 3px; }
.font-group { width: 404px; padding: 8px 0 0 11px; }
.first { gap: 8px; padding-left: 6px; }
.second { gap: 9px; }
.splits { display: flex; gap: 5px; }
.rs { justify-content: flex-start; width: 32px; height: 26px; gap: 3px; padding-left: 1px; }
.letters {
  width: 18px;
  height: 20px;
  font-size: 15px;
  line-height: 18px;
}
.para { margin-left: 2px; }
.grow { margin-left: 6px; }
.combo {
  position: relative;
  height: 25px;
  border: 1px solid #dcdcdc;
  border-radius: 2px;
  background: #eee;
}
.combo .caret {
  position: absolute;
  right: 5px;
  top: 10px;
  color: #666;
  pointer-events: none;
}
.family { width: 196px; }
.pt { width: 61px; }
select {
  width: 100%;
  height: 100%;
  padding: 0 12px;
  border: 0;
  appearance: none;
  background: none;
  color: #808080;
  font: inherit;
}
.tools { display: flex; }
.draw { padding: 0 10px 0 8px; color: #3c3c3c; }
.arrange { padding: 0 9px; }
.tool {
  flex-direction: column;
  justify-content: flex-start;
  width: 50px;
  height: 61px;
  margin-top: 12px;
  border-radius: 2px;
}
.tool-icon {
  display: flex;
  align-items: center;
  justify-content: center;
  width: 100%;
  height: 29px;
}
.tool-label { margin-top: 5px; color: #222; }
.tool .caret { margin-top: 1px; color: #6a6a6a; }
.tool:disabled .tool-label { color: #c4c4c4; }
.tool:disabled .caret { color: #b5b5b5; }
.tool.active { background: #ededed; }
.tool.active .tool-icon { background: #dedede; }
.tool.strong { width: 51px; color: #3c3c3c; }
.tool.strong .tool-icon { padding-bottom: 4px; }
.tool.strong .tool-label { margin-top: 6px; color: #000; }

.workspace { display: flex; flex: 1; min-height: 0; }
.editor { display: flex; flex-direction: column; flex: 1; min-width: 0; }
.doc-tabs { display: flex; height: 24px; flex: none; }
.expand { width: 32px; color: #7a7a7a; }
.dbl { width: 16px; height: 14px; }
.back { transform: scaleX(-1); }
.doc-tab {
  display: flex;
  align-items: center;
  gap: 7px;
  padding: 2px 12px 0;
  color: #222;
}
.doc-tab button { margin-left: 7px; color: #777; }
.doc-tab.current button { margin-left: 0; }
.doc-icon { width: 14px; height: 16px; }
.gray { width: 160px; background: #f0f0f0; }
.gray .doc-icon { color: #979797; }
.current { width: 240px; background: #c3c3c3; color: #0a78eb; white-space: nowrap; }
.current .doc-icon { color: #0a80ff; }

.board {
  display: grid;
  grid-template-columns: 18px 1fr 13px;
  grid-template-rows: 18px 1fr 13px;
  flex: 1;
  min-height: 0;
  border-top: 1px solid #dadada;
}
.corner { grid-area: 1 / 1; background: #efefef; border-bottom: 1px solid #dadada; }
.ruler-h {
  grid-area: 1 / 2;
  width: 100%;
  height: 18px;
  background: #fafafa;
  border-bottom: 1px solid #dadada;
}
.ruler-v {
  grid-area: 2 / 1;
  width: 100%;
  height: 100%;
  background: #fafafa;
  border-right: 1px solid #dadada;
  overflow: hidden;
}
.ruler-h rect, .ruler-v rect { fill: #d4d4d4; }
.ruler-h text, .ruler-v text {
  font-family: "Open Sans", sans-serif;
  font-size: 9px;
  fill: #6e6e6e;
}
.canvas {
  grid-area: 2 / 2;
  min-width: 0;
  min-height: 0;
  padding: 10px 0 0 102px;
  overflow: hidden;
  background: #e4e4e4;
}
.page {
  background: #fff;
  outline: 1px solid #b2b2b2;
  outline-offset: -1px;
}
.pale { fill: url(#pale); }
.band { fill: #abd0cf; }
.stripe { fill: #82bebd; }
.edge { fill: none; stroke: #25918d; stroke-width: 1; }
.fold { fill: none; stroke: #fff; stroke-width: 1; }
.envelope { fill: #fff; stroke: #000; stroke-width: 1; }
.link { fill: none; stroke: #1d7070; stroke-width: 1; }
.tip { fill: #1d7070; }
.caption {
  font-family: "Noto Sans CJK SC", sans-serif;
  font-size: 12px;
  text-anchor: middle;
  fill: #1d7070;
}
.scroll-v {
  grid-area: 1 / 3 / 3 / 4;
  display: flex;
  flex-direction: column;
  padding: 0 1px;
  border-left: 1px solid #dcdcdc;
}
.thumb { background: #bfbfbf; border-radius: 5px; }
.v-before { flex: 95; }
.v-thumb { flex: 291; }
.v-after { flex: 108; }
.scroll-h {
  grid-area: 3 / 1 / 4 / 3;
  display: flex;
  padding: 1px 0;
  border: 1px solid #dcdcdc;
  border-left: 0;
}
.h-before { flex: 68; }
.h-thumb { flex: 932; }
.h-after { flex: 131; }
.scroll-corner { grid-area: 3 / 3; background: #efefef; border-bottom: 1px solid #dcdcdc; }
.palette { display: flex; height: 16px; flex: none; }
.fill-button { width: 32px; color: #3c3c3c; }
.swatches { display: flex; flex: 1; gap: 1px; padding: 1px 0; }
.swatch { flex: 1; height: 14px; }

.side {
  width: 33px;
  flex: none;
  border-left: 1px solid #d2d2d2;
  color: #3c3c3c;
}
.side-toggle { width: 32px; height: 31px; color: #7a7a7a; }
.side-tool { width: 32px; height: 34px; margin-bottom: 10px; }
.side-tool.active { background: #0a80ff; color: #fff; }

.status {
  display: flex;
  align-items: center;
  height: 35px;
  flex: none;
  border-top: 1px solid #dcdcdc;
  color: #3c3c3c;
}
.pages-button { margin: 0 26px 0 19px; }
.pages { width: 22px; height: 14px; }
.page-pick { position: relative; width: 98px; height: 24px; }
.page-pick select { padding: 0; color: #222; }
.page-pick .caret { position: absolute; right: 0; top: 10px; color: #777; pointer-events: none; }
.status-sep { width: 1px; height: 24px; margin: 0 18px 0 6px; background: #d8d8d8; }
.page-tab { margin-right: 27px; color: #111; font-weight: 700; }
.sb { min-width: 12px; height: 24px; }
.zoom-area { display: flex; align-items: center; gap: 6px; margin-left: auto; padding-right: 29px; }
.play { margin-right: 3px; }
.full { margin: 0 2px 0 11px; }
.zoom-value { gap: 8px; margin-left: 10px; color: #111; }
.zoom-value .caret { color: #777; }
input[type="range"] {
  width: 82px;
  height: 12px;
  margin: 0;
  appearance: none;
  background: none;
}
input[type="range"]::-webkit-slider-runnable-track {
  height: 4px;
  border-radius: 2px;
  background: linear-gradient(90deg, #bdbdbd 26%, #dedede 26%);
}
input[type="range"]::-webkit-slider-thumb {
  width: 12px;
  height: 12px;
  margin-top: -4px;
  border: 2px solid #b8b8b8;
  border-radius: 50%;
  appearance: none;
  background: #fff;
}
</style>
